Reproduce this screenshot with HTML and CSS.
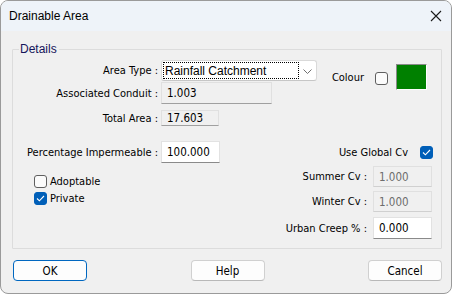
FILE: index.html
```html
<!DOCTYPE html>
<html>
<head>
<meta charset="utf-8">
<link rel="stylesheet" href="styles.css">
</head>
<body>
<div class="window">
  <div class="titlebar">
    <span class="title">Drainable Area</span>
    <svg class="close" width="12" height="12" viewBox="0 0 12 12"><path d="M1 1 L11 11 M11 1 L1 11" stroke="#1a1a1a" stroke-width="1.1" fill="none"/></svg>
  </div>
  <div class="content">
    <div class="group">
      <span class="legend">Details</span>
      <div class="cols">
        <div class="left">
          <div class="row row-type">
            <span class="lbl">Area Type :</span>
            <div class="combo">
              <span class="combo-text">Rainfall Catchment</span>
              <svg class="chev" width="9" height="5" viewBox="0 0 9 5"><path d="M0.5 0.5 L4.5 4.5 L8.5 0.5" stroke="#707070" stroke-width="1" fill="none"/></svg>
            </div>
          </div>
          <div class="row row-conduit">
            <span class="lbl">Associated Conduit :</span>
            <div class="field ro w-conduit">1.003</div>
          </div>
          <div class="row row-total">
            <span class="lbl">Total Area :</span>
            <div class="field ro w-total short">17.603</div>
          </div>
          <div class="row row-perc">
            <span class="lbl">Percentage Impermeable :</span>
            <div class="field w-perc">100.000</div>
          </div>
          <div class="checks">
            <div class="check-row"><span class="cb"></span><span class="cb-label">Adoptable</span></div>
            <div class="check-row"><span class="cb checked"><svg width="9" height="7" viewBox="0 0 9 7"><path d="M1 3.5 L3.4 5.8 L8 1" stroke="#fff" stroke-width="1.1" fill="none"/></svg></span><span class="cb-label">Private</span></div>
          </div>
        </div>
        <div class="right">
          <div class="colour-row">
            <span class="colour-lbl">Colour</span>
            <span class="cb"></span>
            <span class="swatch"></span>
          </div>
          <div class="global-row">
            <span class="global-lbl">Use Global Cv</span>
            <span class="cb checked"><svg width="9" height="7" viewBox="0 0 9 7"><path d="M1 3.5 L3.4 5.8 L8 1" stroke="#fff" stroke-width="1.1" fill="none"/></svg></span>
          </div>
          <div class="rrow rrow-summer">
            <span class="rlbl">Summer Cv :</span>
            <div class="field ro disabled w-cv">1.000</div>
          </div>
          <div class="rrow rrow-winter">
            <span class="rlbl">Winter Cv :</span>
            <div class="field ro disabled w-cv">1.000</div>
          </div>
          <div class="rrow rrow-urban">
            <span class="rlbl">Urban Creep % :</span>
            <div class="field w-cv tall">0.000</div>
          </div>
        </div>
      </div>
    </div>
    <div class="buttons">
      <button class="btn default">OK</button>
      <button class="btn">Help</button>
      <button class="btn">Cancel</button>
    </div>
  </div>
</div>
</body>
</html>
```

FILE: styles.css
```css
* { box-sizing: border-box; }
html, body { margin: 0; padding: 0; background: #ffffff; }
body {
  width: 452px;
  height: 294px;
  font-family: "DejaVu Sans", sans-serif;
  font-stretch: condensed;
  font-size: 11px;
  color: #000;
}
.window {
  width: 452px;
  height: 294px;
  border: 1px solid #9a9a9a;
  border-radius: 8px;
  background: #f0f0f0;
  overflow: hidden;
  display: flex;
  flex-direction: column;
}
.titlebar {
  height: 30px;
  background: #eef3f9;
  display: flex;
  align-items: center;
  justify-content: space-between;
  padding: 0 9px 0 8px;
  flex: none;
}
.title {
  font-family: "Liberation Sans", sans-serif;
  font-stretch: normal;
  font-size: 12px;
  color: #000;
  margin-top: -1px;
}
.content {
  flex: 1;
  padding: 18px 9px 0 11px;
  display: flex;
  flex-direction: column;
}
.group {
  position: relative;
  width: 430px;
  height: 200px;
  border: 1px solid #dcdcdc;
  border-radius: 1px;
}
.legend {
  position: absolute;
  top: -8px;
  left: 6px;
  padding: 0 2px 0 1px;
  background: #f0f0f0;
  color: #14145a;
  font-family: "Liberation Sans", sans-serif;
  font-stretch: normal;
  font-size: 12px;
  line-height: 14px;
}
.cols {
  display: flex;
  justify-content: space-between;
}
.left {
  display: flex;
  flex-direction: column;
  width: 310px;
}
.row {
  display: flex;
  align-items: center;
  gap: 3px;
}
.lbl {
  width: 145px;
  text-align: right;
  white-space: nowrap;
}
.row-type { margin-top: 10px; height: 21px; }
.row-conduit { margin-top: 1px; height: 22px; }
.row-total { margin-top: 6px; height: 16px; }
.row-perc { margin-top: 15px; height: 22px; }
.combo {
  width: 156px;
  height: 21px;
  background: #fff;
  border: 1px solid #d9d9d9;
  border-bottom-color: #c6c6c6;
  border-radius: 3px;
  display: flex;
  align-items: center;
  justify-content: space-between;
  padding: 0 4px 0 1px;
}
.combo-text {
  width: 136px;
  height: 17px;
  border: 1px dotted #000;
  padding: 1px 0 0 1px;
  line-height: 14px;
  font-size: 12px;
  font-family: "Liberation Sans", sans-serif;
  font-stretch: normal;
  white-space: nowrap;
}
.chev { margin-top: 1px; }
.field {
  height: 22px;
  background: #fff;
  border: 1px solid #e2e2e2;
  border-bottom-color: #8a8a8a;
  padding: 0 4px 0 5px;
  display: flex;
  align-items: center;
  white-space: nowrap;
  font-size: 11.5px;
}
.field.ro {
  background: #f0f0f0;
  border-color: #e0e0e0;
  border-bottom-color: #a0a0a0;
}
.field.disabled { color: #6d6d6d; border-bottom-color: #d0d0d0; }
.w-conduit { width: 111px; }
.w-total { width: 58px; }
.w-total.short { height: 16px; }
.w-perc { width: 59px; }
.checks {
  margin-top: 12px;
  margin-left: 21px;
  display: flex;
  flex-direction: column;
  gap: 4px;
}
.check-row {
  display: flex;
  align-items: center;
  gap: 3px;
  height: 13px;
}
.cb {
  width: 13px;
  height: 13px;
  border: 1px solid #5f5f5f;
  border-radius: 3px;
  background: #fbfbfb;
  display: inline-flex;
  align-items: center;
  justify-content: center;
  flex: none;
}
.cb.checked {
  background: #005fb8;
  border-color: #005fb8;
}
.cb-label { font-size: 11px; }
.right {
  display: flex;
  flex-direction: column;
  align-items: flex-end;
  padding-right: 9px;
  width: 118px;
}
.colour-row {
  margin-top: 14px;
  display: flex;
  align-items: center;
  height: 26px;
  margin-right: 5px;
}
.colour-lbl { margin-right: 11px; }
.colour-row .cb { margin-right: 8px; margin-top: 2px; }
.swatch {
  width: 31px;
  height: 26px;
  background: #008000;
  border: 1px solid #8a8a8a;
  border-right-color: #ffffff;
  border-bottom-color: #ffffff;
}
.global-row {
  margin-top: 56px;
  display: flex;
  align-items: center;
  height: 13px;
  margin-right: -1px;
}
.global-lbl { margin-right: 12px; white-space: nowrap; font-size: 11px; }
.rrow {
  display: flex;
  align-items: center;
  gap: 6px;
  white-space: nowrap;
}
.rrow-summer { margin-top: 7px; }
.rrow-winter { margin-top: 4px; }
.rrow-urban { margin-top: 5px; }
.w-cv { width: 59px; height: 21px; }
.w-cv.tall { height: 22px; }
.rlbl { text-align: right; }
.buttons {
  margin-top: 11px;
  display: flex;
  justify-content: space-between;
  padding: 0 0 0 1px;
  width: 430px;
}
.btn {
  width: 74px;
  height: 21px;
  background: #fdfdfd;
  border: 1px solid #d0d0d0;
  border-bottom-color: #b8b8b8;
  border-radius: 4px;
  font-family: "DejaVu Sans", sans-serif;
  font-stretch: condensed;
  font-size: 11.5px;
  color: #000;
  padding: 0;
}
.btn.default {
  border: 1px solid #0067c0;
}
```
